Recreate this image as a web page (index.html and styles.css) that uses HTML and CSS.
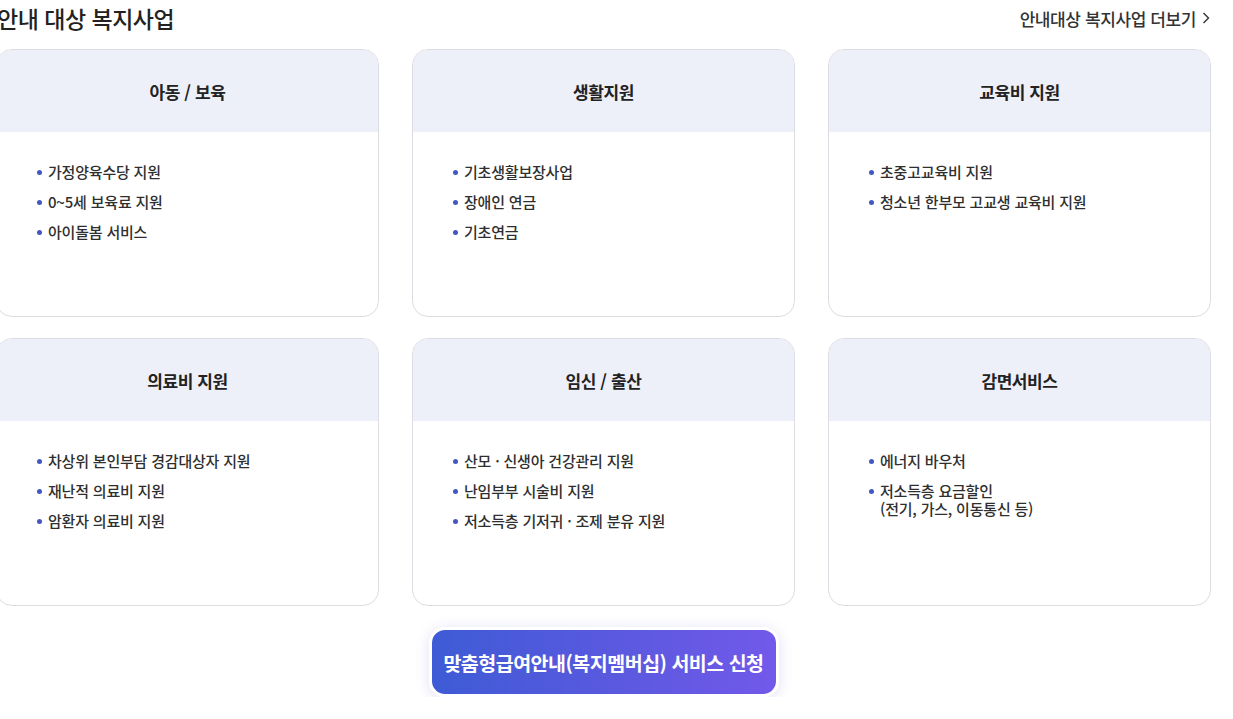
FILE: index.html
```html
<!DOCTYPE html>
<html lang="ko">
<head>
<meta charset="utf-8">
<link rel="stylesheet" href="styles.css">
</head>
<body>
<div class="wrap">
  <div class="top">
    <h2 class="title">안내 대상 복지사업</h2>
    <a class="more">안내대상 복지사업 더보기 <svg width="10" height="14" viewBox="0 0 10 14"><path d="M2.5 2 L7.5 7 L2.5 12" fill="none" stroke="#333" stroke-width="1.4"/></svg></a>
  </div>
  <div class="grid">
    <div class="card">
      <div class="card-head">아동 / 보육</div>
      <ul class="card-list">
        <li>가정양육수당 지원</li>
        <li>0~5세 보육료 지원</li>
        <li>아이돌봄 서비스</li>
      </ul>
    </div>
    <div class="card">
      <div class="card-head">생활지원</div>
      <ul class="card-list">
        <li>기초생활보장사업</li>
        <li>장애인 연금</li>
        <li>기초연금</li>
      </ul>
    </div>
    <div class="card">
      <div class="card-head">교육비 지원</div>
      <ul class="card-list">
        <li>초중고교육비 지원</li>
        <li>청소년 한부모 고교생 교육비 지원</li>
      </ul>
    </div>
    <div class="card">
      <div class="card-head">의료비 지원</div>
      <ul class="card-list">
        <li>차상위 본인부담 경감대상자 지원</li>
        <li>재난적 의료비 지원</li>
        <li>암환자 의료비 지원</li>
      </ul>
    </div>
    <div class="card">
      <div class="card-head">임신 / 출산</div>
      <ul class="card-list">
        <li>산모 · 신생아 건강관리 지원</li>
        <li>난임부부 시술비 지원</li>
        <li>저소득층 기저귀 · 조제 분유 지원</li>
      </ul>
    </div>
    <div class="card">
      <div class="card-head">감면서비스</div>
      <ul class="card-list">
        <li>에너지 바우처</li>
        <li>저소득층 요금할인<br>(전기, 가스, 이동통신 등)</li>
      </ul>
    </div>
  </div>
  <div class="btn-row">
    <a class="apply">맞춤형급여안내(복지멤버십) 서비스 신청</a>
  </div>
</div>
</body>
</html>
```
FILE: styles.css
```css
* { box-sizing: border-box; }
html, body { margin: 0; padding: 0; background: #fff; }
body {
  font-family: "Noto Sans CJK KR", "Noto Sans", sans-serif;
  color: #333;
  overflow: hidden;
}
.wrap {
  width: 1215px;
  margin-left: -4px;
}
.top {
  display: flex;
  justify-content: space-between;
  align-items: center;
  height: 36px;
}
.title {
  margin: 0;
  font-size: 23px;
  font-weight: 500;
  color: #222;
  letter-spacing: -0.5px;
  line-height: 34px;
  padding-left: 1px;
}
.more {
  font-size: 17px;
  color: #333;
  font-weight: 500;
  letter-spacing: -0.4px;
  display: flex;
  align-items: center;
  gap: 5px;
  padding-right: 0;
}
.grid {
  margin-top: 13px;
  display: grid;
  grid-template-columns: repeat(3, 383px);
  column-gap: 33px;
  row-gap: 21px;
}
.card {
  height: 268px;
  border: 1px solid #dcdde2;
  border-radius: 16px;
  overflow: hidden;
  background: #fff;
}
.card-head {
  height: 82px;
  background: #eef0f9;
  display: flex;
  align-items: center;
  justify-content: center;
  font-size: 17px;
  font-weight: 700;
  color: #222;
  letter-spacing: -0.4px;
}
.card-list {
  list-style: none;
  margin: 0;
  padding: 31px 0 0 51px;
}
.card-list li {
  position: relative;
  font-size: 15px;
  font-weight: 500;
  color: #2f2f2f;
  line-height: 18px;
  margin-bottom: 12px;
  letter-spacing: -0.2px;
}
.card-list li::before {
  content: "";
  position: absolute;
  left: -11px;
  top: 7px;
  width: 5px;
  height: 5px;
  border-radius: 50%;
  background: #4456c2;
}
.btn-row {
  display: flex;
  justify-content: center;
  margin-top: 21px;
}
.apply {
  display: flex;
  align-items: center;
  justify-content: center;
  width: 350px;
  height: 70px;
  border: 3px solid #fff;
  border-radius: 16px;
  background: linear-gradient(90deg, #3e5bd5 0%, #5b59df 55%, #7259ea 100%);
  box-shadow: 0 2px 14px rgba(80, 90, 200, 0.18);
  color: #fff;
  font-size: 19.5px;
  font-weight: 700;
  letter-spacing: -0.5px;
}
```
